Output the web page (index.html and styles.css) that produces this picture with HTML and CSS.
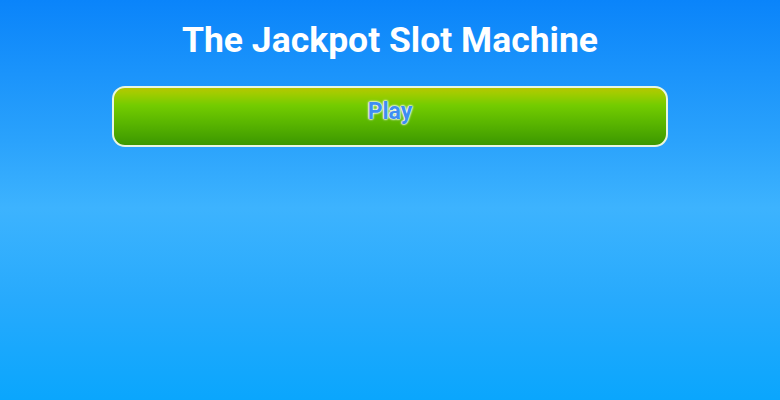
FILE: index.html
```html
<!DOCTYPE html>
<html>
<head>
<meta charset="utf-8">
<link rel="stylesheet" href="styles.css">
</head>
<body>
<main class="page">
  <h1 class="title">The Jackpot Slot Machine</h1>
  <button class="play">Play</button>
</main>
</body>
</html>
```
FILE: styles.css
```css
html, body {
  margin: 0;
  padding: 0;
  height: 100%;
}
body {
  background: linear-gradient(to bottom, #0a84fa 0%, #2aa2fc 35%, #3db3fe 52%, #27aafd 75%, #0aa6fd 100%);
  font-family: Roboto, "Liberation Sans", sans-serif;
}
.page {
  display: flex;
  flex-direction: column;
  align-items: center;
  padding-top: 19px;
}
.title {
  margin: 0;
  color: #ffffff;
  font-size: 35.5px;
  font-weight: 700;
  line-height: 42px;
}
.play {
  margin-top: 25px;
  width: 556px;
  height: 61px;
  border: 2px solid #eaf6e0;
  border-radius: 13px;
  background: linear-gradient(to bottom, #b4c800 0%, #a0cc00 10%, #74cc00 30%, #5cb800 58%, #3c9800 100%);
  font-family: Roboto, "Liberation Sans", sans-serif;
  font-size: 23px;
  font-weight: 700;
  color: #3f8ef2;
  text-shadow: 0 0 1px #ffffff, 0 0 2px #ffffff, 0 0 2px #ffffff, 0 0 3px #e8f4ff;
  padding: 0 0 10px 0;
  cursor: pointer;
}
```
